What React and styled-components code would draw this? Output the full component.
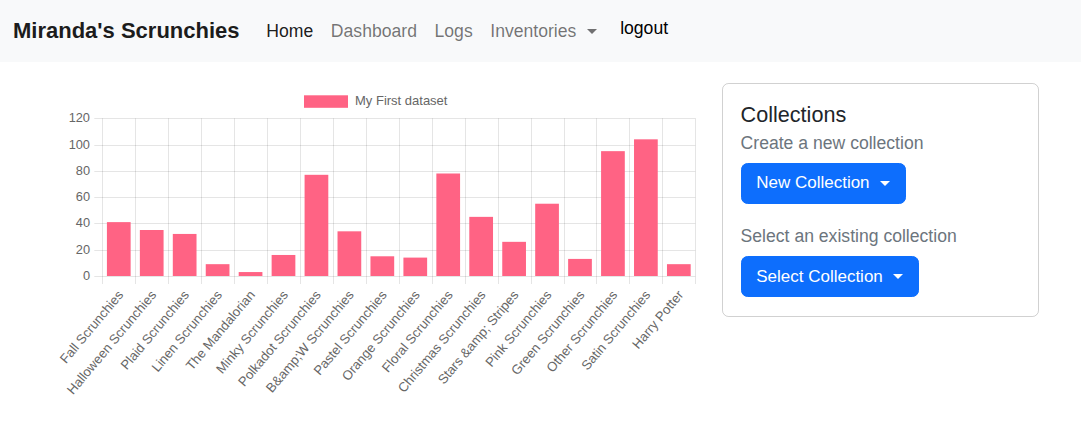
import React from 'react';
import styled, { createGlobalStyle } from 'styled-components';

const GlobalStyle = createGlobalStyle`
  html, body {
    margin: 0;
    padding: 0;
    background: #fff;
    font-family: "Liberation Sans", Arial, Helvetica, sans-serif;
    color: #212529;
  }
  * { box-sizing: border-box; }
`;

const NavBar = styled.nav`
  height: 62px;
  background: #f8f9fa;
  display: flex;
  align-items: center;
  padding: 0 13px;
`;

const Brand = styled.a`
  font-size: 22px;
  font-weight: 700;
  color: #1c1c1c;
  margin-right: 18px;
  text-decoration: none;
`;

const NavLinks = styled.div`
  display: flex;
  align-items: center;
`;

const NavLink = styled.a`
  font-size: 17.6px;
  padding: 0 8.8px;
  color: ${p => (p.$active ? 'rgba(0,0,0,0.9)' : 'rgba(0,0,0,0.55)')};
  text-decoration: none;
  display: flex;
  align-items: center;
`;

const Caret = styled.span`
  display: inline-block;
  margin-left: ${p => p.$gap || 11}px;
  border-top: 5.3px solid currentColor;
  border-left: 5.3px solid transparent;
  border-right: 5.3px solid transparent;
  color: ${p => p.$color || 'inherit'};
`;

const Logout = styled.a`
  font-size: 17.6px;
  color: #000;
  margin-left: 14px;
  margin-bottom: 6px;
  text-decoration: none;
`;

const Main = styled.main`
  display: flex;
  align-items: flex-start;
  padding-top: 21px;
`;

const ChartPanel = styled.section`
  flex: none;
  width: 722px;
`;

const Card = styled.div`
  flex: none;
  width: 317px;
  border: 1px solid rgba(0,0,0,0.18);
  border-radius: 6.6px;
  padding: 17.6px;
  padding-bottom: 19px;
`;

const CardTitle = styled.h5`
  margin: 0 0 2px;
  font-size: 21.6px;
  font-weight: 400;
  line-height: 1.2;
  color: #212529;
`;

const Muted = styled.p`
  margin: 0 0 7px;
  font-size: 17.6px;
  line-height: 26.4px;
  color: #6c757d;
`;

const DropButton = styled.button`
  display: inline-flex;
  align-items: center;
  height: 41px;
  padding: 0 15.5px 0 14.6px;
  background: #0d6efd;
  border: 1px solid #0d6efd;
  border-radius: 6.6px;
  color: #fff;
  font-family: inherit;
  font-size: 17px;
  margin-bottom: ${p => p.$gap || 0}px;
  cursor: pointer;
`;

const labels = [
  'Fall Scrunchies', 'Halloween Scrunchies', 'Plaid Scrunchies', 'Linen Scrunchies',
  'The Mandalorian', 'Minky Scrunchies', 'Polkadot Scrunchies', 'B&amp;W Scrunchies',
  'Pastel Scrunchies', 'Orange Scrunchies', 'Floral Scrunchies', 'Christmas Scrunchies',
  'Stars &amp; Stripes', 'Pink Scrunchies', 'Green Scrunchies', 'Other Scrunchies',
  'Satin Scrunchies', 'Harry Potter',
];
const values = [41, 35, 32, 9, 3, 16, 77, 34, 15, 14, 78, 45, 26, 55, 13, 95, 104, 9];

const X0 = 102.3;
const X1 = 695.3;
const YTOP = 35.3;
const YBOT = 193;
const STEP = (X1 - X0) / labels.length;
const SCALE = (YBOT - YTOP) / 120;
const GRID = 'rgba(0,0,0,0.1)';
const TICK = '#666';
const FONT = '"Liberation Sans", Arial, sans-serif';

function BarChart() {
  const ticks = [0, 20, 40, 60, 80, 100, 120];
  return (
    <svg width="722" height="335" style={{ display: 'block' }}>
      {/* legend */}
      <rect x="304" y="12.3" width="44" height="12.5" fill="#ff6384" />
      <text x="355" y="19" fontSize="13" fill={TICK} dominantBaseline="middle" fontFamily={FONT}>
        My First dataset
      </text>

      {/* grid */}
      {labels.concat(['']).map((_, i) => {
        const x = Math.round(X0 + i * STEP) + 0.5;
        return <line key={'v' + i} x1={x} x2={x} y1={YTOP} y2={YBOT + 8} stroke={GRID} />;
      })}
      {ticks.map(v => {
        const y = Math.round(YBOT - v * SCALE) + 0.5;
        return (
          <g key={'h' + v}>
            <line x1={X0 - 8} x2={X1} y1={y} y2={y} stroke={GRID} />
            <text x="90" y={y} fontSize="12.8" fill={TICK} textAnchor="end" dominantBaseline="middle"
              fontFamily={FONT}>{v}</text>
          </g>
        );
      })}

      {/* bars */}
      {values.map((v, i) => {
        const w = STEP * 0.72;
        const cx = X0 + (i + 0.5) * STEP;
        const h = v * SCALE;
        return <rect key={'b' + i} x={cx - w / 2} y={YBOT - h} width={w} height={h} fill="#ff6384" />;
      })}

      {/* x labels */}
      {labels.map((l, i) => {
        const cx = X0 + (i + 0.5) * STEP + 2.5;
        return (
          <text key={'l' + i} fontSize="13.2" fill={TICK} textAnchor="end" dominantBaseline="middle"
            fontFamily={FONT}
            transform={`translate(${cx} ${YBOT + 17}) rotate(-50)`}>{l}</text>
        );
      })}
    </svg>
  );
}

export default function App() {
  return (
    <>
      <GlobalStyle />
      <NavBar>
        <Brand href="#">Miranda's Scrunchies</Brand>
        <NavLinks>
          <NavLink $active href="#">Home</NavLink>
          <NavLink href="#">Dashboard</NavLink>
          <NavLink href="#">Logs</NavLink>
          <NavLink href="#">Inventories<Caret /></NavLink>
        </NavLinks>
        <Logout href="#">logout</Logout>
      </NavBar>
      <Main>
        <ChartPanel>
          <BarChart />
        </ChartPanel>
        <Card>
          <CardTitle>Collections</CardTitle>
          <Muted>Create a new collection</Muted>
          <DropButton $gap={18.7}>New Collection<Caret $gap={10} $color="#fff" /></DropButton>
          <Muted>Select an existing collection</Muted>
          <DropButton>Select Collection<Caret $gap={10} $color="#fff" /></DropButton>
        </Card>
      </Main>
    </>
  );
}
